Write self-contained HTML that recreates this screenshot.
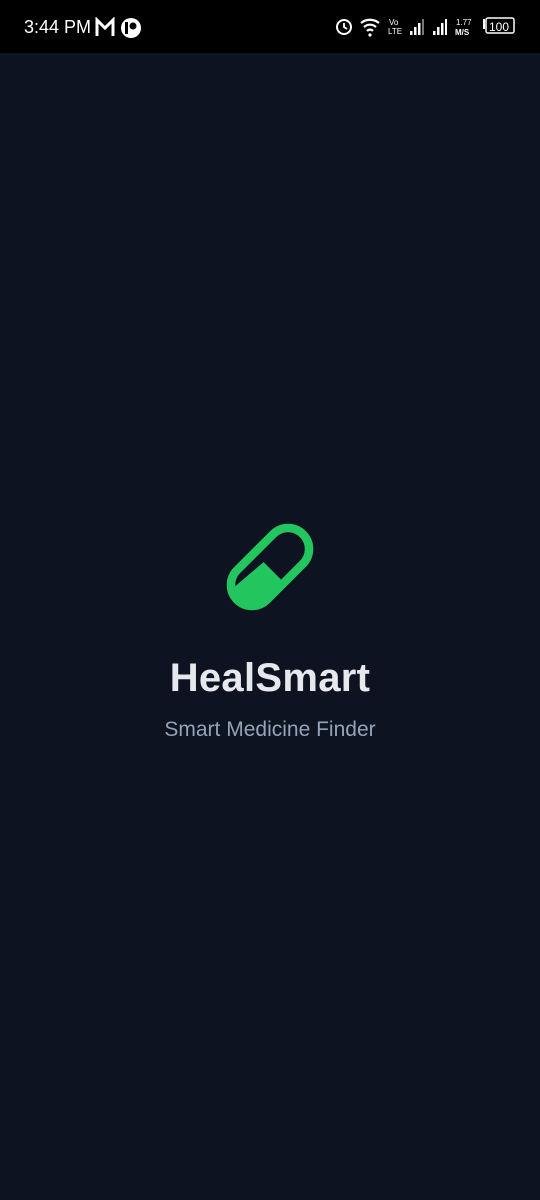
<!DOCTYPE html>
<html><head><meta charset="utf-8"><style>
html,body{margin:0;padding:0;width:540px;height:1200px;background:#0d1320;overflow:hidden;font-family:"Liberation Sans",sans-serif}
.sb{position:absolute;left:0;top:0;width:540px;height:53px;background:#000;color:#fff}
.t1{position:absolute;top:658px;left:0;width:540px;text-align:center;font-weight:bold;font-size:40px;line-height:1;color:#e6e8ee;letter-spacing:0.3px}
.t2{position:absolute;top:719px;left:0;width:540px;text-align:center;font-size:21px;line-height:1;color:#94a3b8}
</style></head><body>
<div class="sb">
<span style="position:absolute;left:24px;top:17px;font-size:18px">3:44 PM</span>
<svg style="position:absolute;left:95px;top:17px" width="52" height="22" viewBox="0 0 52 22">
<path d="M2 19V3l8 8 8-8v16" fill="none" stroke="#fff" stroke-width="3"/>
<circle cx="36" cy="11" r="10" fill="#fff"/><rect x="30" y="5" width="3" height="12" fill="#000"/><circle cx="38" cy="9" r="3.5" fill="#000"/>
</svg>
<svg style="position:absolute;left:333px;top:14px" width="185" height="26" viewBox="0 0 185 26">
<circle cx="11" cy="13" r="7" fill="none" stroke="#fff" stroke-width="2"/><path d="M11 9v4l3 2" stroke="#fff" stroke-width="1.8" fill="none"/>
<path d="M28 9a14 14 0 0 1 18 0M31 13a9 9 0 0 1 12 0M34 17a4 4 0 0 1 6 0" stroke="#fff" stroke-width="2.2" fill="none"/><circle cx="37" cy="21" r="1.6" fill="#fff"/>
<text x="56" y="11" font-size="8" fill="#fff" font-family="Liberation Sans">Vo</text><text x="55" y="20" font-size="8" fill="#fff" font-family="Liberation Sans">LTE</text>
<rect x="77" y="17" width="2.5" height="4" fill="#fff"/><rect x="81" y="13" width="2.5" height="8" fill="#fff"/><rect x="85" y="9" width="2.5" height="12" fill="#fff"/><rect x="89" y="5" width="2" height="16" fill="#777"/>
<rect x="100" y="17" width="2.5" height="4" fill="#fff"/><rect x="104" y="13" width="2.5" height="8" fill="#fff"/><rect x="108" y="9" width="2.5" height="12" fill="#fff"/><rect x="112" y="5" width="2" height="16" fill="#fff"/>
<text x="123" y="11" font-size="8" fill="#fff" font-family="Liberation Sans">1.77</text><text x="122" y="21" font-size="8" font-weight="bold" fill="#fff" font-family="Liberation Sans">M/S</text>
<rect x="150" y="5" width="2" height="10" fill="#fff"/><rect x="153" y="4" width="28" height="15" rx="2" fill="none" stroke="#fff" stroke-width="1.5"/>
<text x="156" y="17" font-size="12" fill="#fff" font-family="Liberation Sans">100</text>
</svg>
</div>
<svg style="position:absolute;left:220px;top:517px" width="100" height="100" viewBox="-50 -50 100 100">
<g transform="rotate(-45)">
<defs><clipPath id="c"><polygon points="-50,-12 -1,-8 -1,25 -50,25"/></clipPath></defs>
<rect x="-46.5" y="-21" width="93" height="42" rx="21" fill="#22c55e" clip-path="url(#c)"/>
<rect x="-46.5" y="-21" width="93" height="42" rx="21" fill="none" stroke="#22c55e" stroke-width="8.5"/>
</g>
</svg>
<div class="t1">HealSmart</div>
<div class="t2">Smart Medicine Finder</div>
</body></html>
